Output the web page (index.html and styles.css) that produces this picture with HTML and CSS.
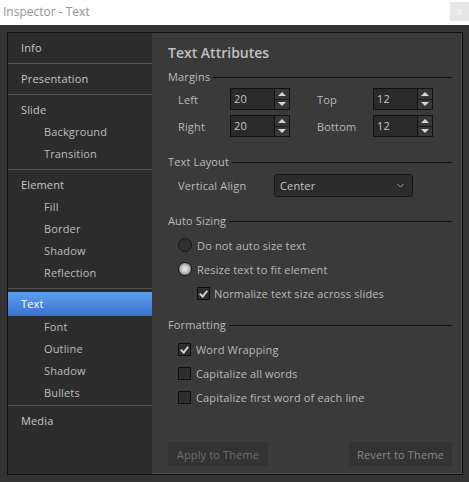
FILE: index.html
```html
<!DOCTYPE html>
<html lang="en">
<head>
    <meta charset="UTF-8">
    <title>Inspector - Text</title>
    <link rel="stylesheet" href="styles.css">
</head>
<body>
    <div class="titlebar">
        <span class="title">Inspector - Text</span>
        <span class="close">x</span>
    </div>

    <div class="window">
        <div class="frame">
            <nav class="sidebar">
                <div class="group">
                    <div class="item">Info</div>
                </div>
                <div class="group">
                    <div class="item">Presentation</div>
                </div>
                <div class="group">
                    <div class="item">Slide</div>
                    <div class="item sub">Background</div>
                    <div class="item sub">Transition</div>
                </div>
                <div class="group">
                    <div class="item">Element</div>
                    <div class="item sub">Fill</div>
                    <div class="item sub">Border</div>
                    <div class="item sub">Shadow</div>
                    <div class="item sub">Reflection</div>
                </div>
                <div class="group current">
                    <div class="item active">Text</div>
                    <div class="item sub">Font</div>
                    <div class="item sub">Outline</div>
                    <div class="item sub">Shadow</div>
                    <div class="item sub">Bullets</div>
                </div>
                <div class="group last">
                    <div class="item">Media</div>
                </div>
            </nav>

            <main class="panel">
                <h1 class="heading">Text Attributes</h1>

                <div class="legend legend-margins">Margins</div>
                <div class="margins">
                    <span class="label">Left</span>
                    <div class="spin"><span class="val">20</span><span class="arrows"><span class="up"></span><span class="down"></span></span></div>
                    <span class="label">Top</span>
                    <div class="spin"><span class="val">12</span><span class="arrows"><span class="up"></span><span class="down"></span></span></div>
                    <span class="label">Right</span>
                    <div class="spin"><span class="val">20</span><span class="arrows"><span class="up"></span><span class="down"></span></span></div>
                    <span class="label">Bottom</span>
                    <div class="spin"><span class="val">12</span><span class="arrows"><span class="up"></span><span class="down"></span></span></div>
                </div>

                <div class="legend legend-layout">Text Layout</div>
                <div class="align-row">
                    <span class="align-label">Vertical Align</span>
                    <div class="select">
                        <span>Center</span>
                        <svg width="7" height="5" viewBox="0 0 7 5"><path d="M0.5 1 L3.5 4 L6.5 1" fill="none" stroke="#a8a8a8" stroke-width="1"/></svg>
                    </div>
                </div>

                <div class="legend legend-sizing">Auto Sizing</div>
                <div class="options">
                    <div class="option"><span class="radio"></span>Do not auto size text</div>
                    <div class="option"><span class="radio on"></span>Resize text to fit element</div>
                    <div class="option nested"><span class="check on"></span>Normalize text size across slides</div>
                </div>

                <div class="legend legend-format">Formatting</div>
                <div class="options">
                    <div class="option"><span class="check on"></span>Word Wrapping</div>
                    <div class="option"><span class="check"></span>Capitalize all words</div>
                    <div class="option"><span class="check"></span>Capitalize first word of each line</div>
                </div>

                <div class="actions">
                    <button class="btn btn-apply">Apply to Theme</button>
                    <button class="btn btn-revert">Revert to Theme</button>
                </div>
            </main>
        </div>
    </div>
</body>
</html>
```

FILE: styles.css
```css
* {
    box-sizing: border-box;
}
body {
    margin: 0;
    background-color: #333333;
    font-family: "Open Sans", "Noto Sans", sans-serif;
    font-size: 11px;
    letter-spacing: 0.15px;
    color: #b9b9b9;
}
.titlebar {
    height: 25px;
    background-color: #ffffff;
    display: flex;
    justify-content: space-between;
}
.title {
    color: #949494;
    font-size: 12px;
    letter-spacing: 0;
    line-height: 24px;
    padding-left: 3px;
}
.close {
    width: 19px;
    height: 19px;
    margin-top: 2px;
    background-color: #e6e6e6;
    color: #fafafa;
    font-size: 10px;
    line-height: 18px;
    text-align: center;
}
.window {
    height: 457px;
    padding: 7px 6px 7px 7px;
}
.frame {
    height: 100%;
    border: 1px solid #111111;
    display: flex;
}

/* left navigation */
.sidebar {
    width: 144px;
    background-color: #2c2c2c;
}
.group {
    padding: 4px 0;
    border-bottom: 1px solid #555555;
}
.group.current {
    padding-bottom: 1px;
}
.group.last {
    border-bottom: none;
}
.item {
    height: 22px;
    line-height: 22px;
    padding-left: 13px;
    color: #c6c6c6;
}
.item.sub {
    padding-left: 36px;
    color: #bdbdbd;
}
.item.active {
    height: 24px;
    line-height: 24px;
    margin-top: -1px;
    background: linear-gradient(#5c9fee, #3a72cf);
    color: #ffffff;
}

/* right panel */
.panel {
    flex: 1;
    background-color: #3a3a3a;
    border-right: 1px solid #4d4d4d;
    border-bottom: 1px solid #4d4d4d;
    padding: 0 9px 7px 16px;
    display: flex;
    flex-direction: column;
}
.heading {
    margin: 10px 0 0;
    font-size: 14px;
    font-weight: 600;
    letter-spacing: 0;
    line-height: 20px;
    color: #c0c0c0;
}
.legend {
    display: flex;
    align-items: center;
    gap: 3px;
    line-height: 16px;
    color: #bcbcbc;
}
.legend::after {
    content: '';
    flex: 1;
    border-top: 1px solid #111111;
}
.legend-margins {
    margin-top: 6px;
}
.legend-layout {
    margin-top: 17px;
}
.legend-sizing {
    margin-top: 16px;
}
.legend-format {
    margin-top: 12px;
}

.margins {
    display: grid;
    grid-template-columns: 52px 87px 56px 60px;
    row-gap: 5px;
    align-items: center;
    margin-top: 3px;
    padding-left: 10px;
}
.spin {
    display: flex;
    width: 60px;
    height: 22px;
    border: 1px solid #111111;
    background-color: #2a2a2a;
}
.spin .val {
    flex: 1;
    padding-left: 3px;
    line-height: 20px;
    color: #c8c8c8;
}
.arrows {
    width: 15px;
    border-left: 1px solid #111111;
    display: flex;
    flex-direction: column;
}
.arrows span {
    flex: 1;
    display: flex;
    align-items: center;
    justify-content: center;
    background-color: #373737;
}
.arrows span + span {
    border-top: 1px solid #1a1a1a;
}
.arrows .up::before,
.arrows .down::before {
    content: '';
    border-left: 4px solid transparent;
    border-right: 4px solid transparent;
}
.arrows .up::before {
    border-bottom: 4px solid #d4d4d4;
}
.arrows .down::before {
    border-top: 4px solid #d4d4d4;
}

.align-row {
    display: flex;
    align-items: center;
    margin-top: 4px;
    padding-left: 10px;
}
.align-label {
    width: 96px;
}
.select {
    width: 139px;
    height: 23px;
    border: 1px solid #141414;
    border-radius: 3px;
    background-color: #2c2c2c;
    padding: 0 8px 0 5px;
    display: flex;
    align-items: center;
    justify-content: space-between;
    color: #c4c4c4;
}

.options {
    margin-top: 4px;
}
.option {
    display: flex;
    align-items: center;
    gap: 5px;
    height: 24px;
    padding-left: 10px;
}
.option.nested {
    padding-left: 29px;
    gap: 4px;
}
.radio {
    width: 14px;
    height: 14px;
    border-radius: 50%;
    border: 1px solid #151515;
    background-color: #303030;
}
.radio.on {
    background: radial-gradient(circle, #e6e6e6 0, #cfcfcf 35%, #8a8a8a 75%, #5a5a5a 100%);
}
.check {
    width: 13px;
    height: 13px;
    border: 1px solid #0e0e0e;
    background-color: #2e2e2e;
    position: relative;
}
.check.on::after {
    content: '';
    position: absolute;
    left: 3px;
    top: 1px;
    width: 3px;
    height: 6px;
    border-right: 2px solid #d0d0d0;
    border-bottom: 2px solid #d0d0d0;
    transform: rotate(40deg);
}

.actions {
    margin-top: auto;
    display: flex;
    justify-content: space-between;
}
.btn {
    height: 24px;
    border: none;
    background-color: #333333;
    font-family: inherit;
    font-size: 11px;
    letter-spacing: 0.15px;
    padding: 0;
}
.btn-apply {
    width: 100px;
    color: #6e6e6e;
}
.btn-revert {
    width: 103px;
    color: #8a8a8a;
}
```
